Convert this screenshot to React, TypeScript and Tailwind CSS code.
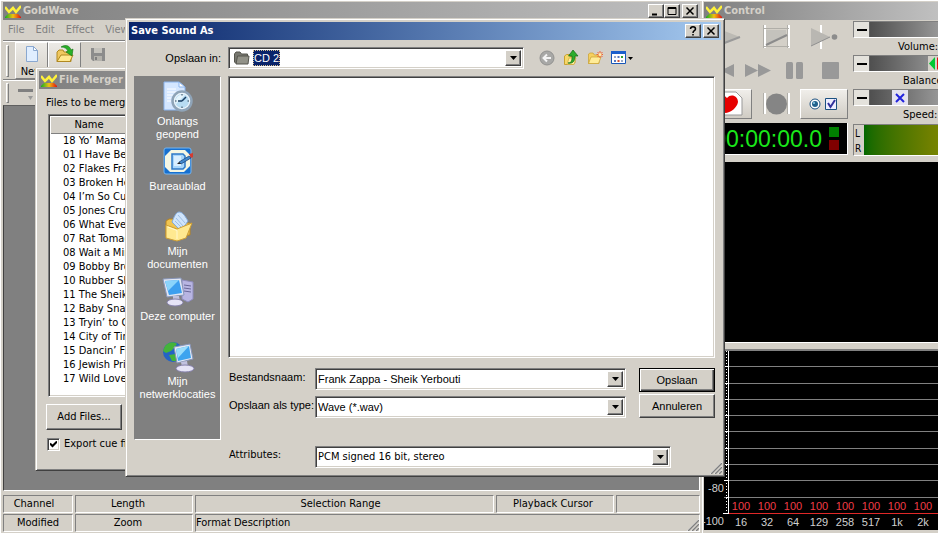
import { useState } from "react";
import type { ReactNode } from "react";
import clsx from "clsx";

const raised = "border border-t-white border-l-white border-r-[#404040] border-b-[#404040] shadow-[inset_-1px_-1px_0_#808080]";
const sunken = "border border-t-[#808080] border-l-[#808080] border-r-white border-b-white";
const deep = "border border-t-[#808080] border-l-[#808080] border-r-white border-b-white shadow-[inset_1px_1px_0_#404040,inset_-1px_-1px_0_#d4d0c8]";
const windowFrame = "border border-t-[#d4d0c8] border-l-[#d4d0c8] border-r-[#404040] border-b-[#404040] shadow-[inset_1px_1px_0_#fff,inset_-1px_-1px_0_#808080] bg-[#d4d0c8]";

const tracks = [
  "18 Yo’ Mama", "01 I Have Been", "02 Flakes Frank", "03 Broken Hearts",
  "04 I’m So Cute", "05 Jones Crush", "06 What Ever", "07 Rat Tomago", "08 Wait a Minute",
  "09 Bobby Brown", "10 Rubber Shirt", "11 The Sheik", "12 Baby Snakes", "13 Tryin’ to Grow",
  "14 City of Tiny", "15 Dancin’ Fool", "16 Jewish Princess", "17 Wild Love",
];

const bands = ["16", "32", "64", "129", "258", "517", "1k", "2k"];

export default function App() {
  return (
    <div className="relative flex h-screen min-h-[533px] overflow-hidden bg-[#d4d0c8] font-['DejaVu_Sans_Condensed','DejaVu_Sans',sans-serif] text-[11px] leading-[14px] text-black">
      <MainWindow />
      <ControlWindow />
      <MergerWindow />
      <SaveDialog />
    </div>
  );
}

function TitleBar({ title, active, logo, children }: { title: string; active?: boolean; logo?: boolean; children?: ReactNode }) {
  return (
    <div
      className={clsx(
        "flex h-[18px] shrink-0 items-center gap-0.5 bg-linear-to-r px-0.5",
        active ? "from-[#0a246a] to-[#a6caf0] text-white" : "from-[#808080] to-[#c0c0c0] text-[#d4d0c8]",
      )}
    >
      {logo && <Logo />}
      <h2 className="flex-1 truncate font-bold">{title}</h2>
      {children}
    </div>
  );
}

function CaptionButton({ label, children }: { label: string; children: ReactNode }) {
  return (
    <button aria-label={label} className={clsx("flex h-3.5 w-4 items-center justify-center bg-[#d4d0c8]", raised)}>
      <svg width="10" height="10" viewBox="0 0 10 10" fill="none" stroke="#000" strokeWidth="1.5">{children}</svg>
    </button>
  );
}

/* ---------- main window ---------- */

function MainWindow() {
  return (
    <main className="flex min-w-0 flex-1 flex-col border-t border-l border-white px-0.5 pt-px">
      <TitleBar title="GoldWave" logo>
        <div className="flex">
          <CaptionButton label="Minimize"><path d="M1 8.500h5" strokeWidth="2" /></CaptionButton>
          <CaptionButton label="Maximize"><path d="M1 1.500h8v7h-8z" strokeWidth="1" /><path d="M1 2h8" strokeWidth="2" /></CaptionButton>
        </div>
        <CaptionButton label="Close"><path d="M1.500 1.500l7 7M8.500 1.500l-7 7" /></CaptionButton>
      </TitleBar>
      <nav className="flex h-5 items-center gap-[11px] pl-[5px] text-[#808080]">
        {["File", "Edit", "Effect", "View"].map((m) => <button key={m}>{m}</button>)}
      </nav>
      <div className="flex h-[39px] items-start border-t border-[#808080] pl-[3px] shadow-[inset_0_1px_0_#fff]">
        <div className="mt-1 mr-1.5 h-8 w-[3px] border border-t-white border-r-[#808080] border-b-[#808080] border-l-white" />
        <ToolButton label="New" up><NewIcon /></ToolButton>
        <ToolButton label="Open" up><OpenIcon /></ToolButton>
        <ToolButton label="Save"><SaveIcon /></ToolButton>
      </div>
      <div className="flex h-[26px] items-center border-t border-[#808080] pl-[3px] shadow-[inset_0_1px_0_#fff]">
        <div className="mr-2 h-5 w-[3px] border border-t-white border-r-[#808080] border-b-[#808080] border-l-white" />
        <svg width="20" height="16" viewBox="0 0 20 16"><path d="M1 4h15v3H1z" fill="#808080" /><path d="M11 11h5l-2.500 4z" fill="#999" /></svg>
      </div>
      <div className="flex-1 border border-t-[#606060] border-r-white border-b-white border-l-[#404040] bg-[#808080]" />
      <footer className="flex flex-col gap-px pt-1 pb-px text-center">
        <div className="flex gap-0.5">
          <StatusCell className="w-[70px] pr-2">Channel</StatusCell>
          <StatusCell className="w-[118px] pr-3">Length</StatusCell>
          <StatusCell className="flex-1 pr-2">Selection Range</StatusCell>
          <StatusCell className="w-[118px] pr-1">Playback Cursor</StatusCell>
          <StatusCell className="w-[84px]" />
        </div>
        <div className="flex gap-0.5">
          <StatusCell className="w-[70px]">Modified</StatusCell>
          <StatusCell className="w-[118px] pr-3">Zoom</StatusCell>
          <StatusCell className="flex flex-1 justify-between">Format Description<Grip /></StatusCell>
        </div>
      </footer>
    </main>
  );
}

function ToolButton({ label, up, children }: { label: string; up?: boolean; children: ReactNode }) {
  return (
    <button
      className={clsx(
        "mt-px flex h-[37px] w-[33px] flex-col items-center gap-0.5 pt-0.5",
        up ? "border border-t-white border-r-[#808080] border-b-[#808080] border-l-white bg-linear-to-b from-[#eceae6] to-[#d4d0c8]" : "border border-transparent text-[#808080]",
      )}
    >
      {children}
      {label}
    </button>
  );
}

function StatusCell({ className, children }: { className?: string; children?: ReactNode }) {
  return <div className={clsx("h-[18px] leading-4 whitespace-nowrap", sunken, className)}>{children}</div>;
}

/* ---------- control window ---------- */

function ControlWindow() {
  return (
    <aside className="flex w-59 shrink-0 flex-col overflow-hidden border-t border-l border-white pt-px pl-px">
      <TitleBar title="Control" logo />
      <div className="flex gap-[5px] pt-px">
        <div className="w-36 shrink-0">
          <div className="grid h-[33px] grid-cols-3 items-center">
            <TransportIcon label="Play"><path d="M10 3l26 10-26 11z" fill="#bcbab4" /><path d="M10 23l26-10" stroke="#999" strokeWidth="2" /></TransportIcon>
            <TransportIcon label="Play selection"><path d="M13 1v23M37 1v23" stroke="#fff" strokeWidth="2" /><path d="M11.500 1v23M35.500 1v23M11 4.500h26M11 22.500h26" stroke="#b0aea8" /><path d="M14 6h20v5L14 20z" fill="#c4c2bc" /><path d="M14 21l21-10" stroke="#8c8c8c" strokeWidth="2" /></TransportIcon>
            <TransportIcon label="Play from cursor"><path d="M21 1v24" stroke="#fff" strokeWidth="2" /><path d="M11 4l19 9-19 9z" fill="#b9b7b2" /><path d="M11 22l19-9" stroke="#909090" /><circle cx="34.500" cy="13" r="2.800" fill="#8c8c8c" /></TransportIcon>
          </div>
          <div className="grid h-[33px] grid-cols-4 items-center">
            <TransportIcon label="Rewind"><path d="M23 7v13l-13-6.500zM36 7v13l-13-6.500z" fill="#999" /></TransportIcon>
            <TransportIcon label="Fast forward"><path d="M11 7v13l13-6.500zM24 7v13l13-6.500z" fill="#999" /></TransportIcon>
            <TransportIcon label="Pause"><rect x="16" y="5" width="7" height="17" rx="1.500" fill="#999" /><rect x="26" y="5" width="7" height="17" rx="1.500" fill="#999" /></TransportIcon>
            <TransportIcon label="Stop"><rect x="16" y="5" width="17" height="17" rx="1" fill="#999" /></TransportIcon>
          </div>
          <div className="grid h-[33px] grid-cols-3 items-center">
            <TransportIcon label="Record" up><path d="M10 2h22l6 6v17H10z" fill="#fff" stroke="#999" /><path d="M14 6c4-3 7 0 9 2 4-5 11-2 11 4-1 6-7 10-12 11-7-1-12-7-12-12 0-3 2-5 4-5z" fill="#e60000" /></TransportIcon>
            <TransportIcon label="Record selection"><path d="M13 3v21M37 3v21" stroke="#fff" strokeWidth="2" /><path d="M11.500 3v21M35.500 3v21" stroke="#b0aea8" /><circle cx="24.500" cy="14" r="10.500" fill="#858585" /></TransportIcon>
            <TransportIcon label="Properties" up>
              <circle cx="15" cy="14" r="5" fill="#fff" stroke="#1c5180" /><circle cx="15" cy="14" r="3" fill="#21618c" /><circle cx="14" cy="13" r="1" fill="#8fd0e8" />
              <path d="M25.500 8.500h11v11h-11z" fill="#eef" stroke="#1c5180" /><path d="M28 13l2.500 4L35 10" stroke="#31319c" strokeWidth="2" />
            </TransportIcon>
          </div>
          <div className="mt-[3px] flex h-8 items-center justify-end gap-[7px] border-r border-b border-white bg-black pr-2">
            <output className="font-['Liberation_Sans',sans-serif] text-[23px] leading-7 text-[#1ae81a]">00:00:00.0</output>
            <div className="flex flex-col gap-[3px]">
              <span className="size-2.5 bg-[#008000]" />
              <span className="size-2.5 bg-[#800000]" />
            </div>
          </div>
        </div>
        <div className="w-36 shrink-0">
          <Slider label="Volume:" labelClass="pl-[45px]" />
          <Slider label="Balance:" labelClass="pl-[50px]">
            <span className="ml-[58px] flex w-4 items-center bg-[#d4d0c8] px-px">
              <svg width="14" height="13" viewBox="0 0 14 13"><path d="M6 0v13L0 6.500z" fill="#00c832" /><path d="M8 0v13l6-6.500z" fill="#e01010" /></svg>
            </span>
          </Slider>
          <Slider label="Speed:" labelClass="pl-[50px]">
            <span className="ml-[22px] flex w-4 items-center justify-center bg-[#e4e2f0]">
              <svg width="10" height="10" viewBox="0 0 10 10" stroke="#2222dd" strokeWidth="2"><path d="M1 1l8 8M9 1L1 9" /></svg>
            </span>
          </Slider>
          <div className={clsx("mt-px flex h-8", sunken)}>
            <div className="w-2.5 pt-px pl-px text-[10px] leading-[15px]">L<br />R</div>
            <div className="flex-1 bg-linear-to-r from-[#006800] via-[#708000] to-[#a0a000]" />
          </div>
        </div>
      </div>
      <div className="mt-1.5 flex-1 border-b border-white bg-black" />
      <Spectrum />
    </aside>
  );
}

function TransportIcon({ label, up, children }: { label: string; up?: boolean; children: ReactNode }) {
  return (
    <button
      aria-label={label}
      className={clsx(
        "flex h-[30px] items-center justify-center",
        up && "border border-t-white border-r-[#808080] border-b-[#808080] border-l-white bg-linear-to-b from-[#f0eeea] to-[#d0ccc4]",
      )}
    >
      <svg className="shrink-0" width="48" height="27" viewBox="0 0 48 27" fill="none">{children}</svg>
    </button>
  );
}

function Slider({ label, labelClass, children }: { label: string; labelClass: string; children?: ReactNode }) {
  return (
    <div className="h-[34px]">
      <div className={clsx("flex h-[17px] bg-linear-to-r from-[#404040] to-[#d8d8d8]", sunken)}>
        <button aria-label={label + " down"} className="flex w-4 items-center justify-center border-r border-[#606060] bg-[#e4e2dc]">
          <span className="h-0.5 w-2.5 bg-black" />
        </button>
        {children}
      </div>
      <div className={clsx("leading-[17px]", labelClass)}>{label}</div>
    </div>
  );
}

function Spectrum() {
  return (
    <div className="mt-1.5 mb-[3px] h-[181px] overflow-hidden border-t-2 border-[#808080] bg-black font-['Liberation_Sans',sans-serif]">
      <svg width="300" height="180" viewBox="0 0 300 180" fontSize="11">
        <g stroke="#808080">
          {[15, 32, 48, 64, 80, 97, 113, 129, 146].map((y) => <path key={y} d={`M20 ${y}.5H300`} />)}
        </g>
        <path d="M22.500 0V163" stroke="#fff" strokeDasharray="1 2" />
        <path d="M24.500 0V163" stroke="#fff" />
        <path d="M20 15.500h5M20 32.500h5M20 48.500h5M20 64.500h5M20 80.500h5M20 97.500h5M20 113.500h5M20 129.500h5M22 146.500h3M19 162.500h5" stroke="#fff" />
        <path d="M25 162.500H300" stroke="#e02828" />
        <g fill="#d0d0d0" textAnchor="end">
          <text x="20" y="141">-80</text>
          <text x="20" y="174">-100</text>
        </g>
        <g textAnchor="middle">
          {bands.map((b, i) => (
            <g key={b}>
              <text x={37 + i * 26} y="159" fill="#f03c46">100</text>
              <text x={37 + i * 26} y="175" fill="#d0d0d0">{b}</text>
            </g>
          ))}
        </g>
      </svg>
    </div>
  );
}

/* ---------- file merger ---------- */

function MergerWindow() {
  const [cue, setCue] = useState(true);
  return (
    <section className={clsx("absolute top-[67px] left-[35px] flex h-[404px] w-[480px] flex-col p-[3px]", windowFrame)}>
      <TitleBar title="File Merger" logo />
      <div className="flex flex-1 flex-col px-[7px] pt-2">
        <h3 className="leading-3">Files to be merged:</h3>
        <div className={clsx("mt-[5px] ml-0.5 h-[283px] overflow-hidden bg-white p-0.5", deep)}>
          <table className="w-full border-collapse">
            <thead>
              <tr className="h-4 bg-[#d4d0c8]">
                <th className="w-20 border-b border-[#808080] p-0 pr-1 font-normal">Name</th>
                <th className="border-b border-[#808080] p-0 font-normal" />
              </tr>
            </thead>
            <tbody>
              {tracks.map((t) => <tr key={t} className="h-3.5"><td colSpan={2} className="p-0 pl-3">{t}</td></tr>)}
            </tbody>
          </table>
        </div>
        <button className={clsx("mt-[7px] h-[26px] w-[76px]", raised)}>Add Files...</button>
        <label className="mt-[7px] flex items-center gap-1 pl-px">
          <Check checked={cue} onChange={setCue} />
          Export cue file
        </label>
      </div>
    </section>
  );
}

function Check({ checked, onChange }: { checked: boolean; onChange: (v: boolean) => void }) {
  return (
    <span className="relative flex">
      <input type="checkbox" checked={checked} onChange={(e) => onChange(e.target.checked)} className={clsx("size-[13px] appearance-none bg-white", deep)} />
      {checked && <svg className="pointer-events-none absolute top-[3px] left-[3px]" width="7" height="7" viewBox="0 0 7 7" fill="none" stroke="#000" strokeWidth="2"><path d="M0 2.500l2.500 2.500L7 .5" /></svg>}
    </span>
  );
}

/* ---------- save dialog ---------- */

function SaveDialog() {
  const [name, setName] = useState("Frank Zappa - Sheik Yerbouti");
  return (
    <section role="dialog" aria-label="Save Sound As" className={clsx("absolute top-[18px] left-[125px] flex h-[459px] w-[600px] flex-col p-[3px] font-['Liberation_Sans',sans-serif]", windowFrame)}>
      <div className="font-['DejaVu_Sans_Condensed','DejaVu_Sans',sans-serif]">
        <TitleBar title="Save Sound As" active>
          <CaptionButton label="Help"><path d="M2.500 3c0-3 5-3 5 0 0 2-2.500 1.500-2.500 4M5 8v1.500" /></CaptionButton>
          <CaptionButton label="Close"><path d="M1.500 1.500l7 7M8.500 1.500l-7 7" /></CaptionButton>
        </TitleBar>
      </div>
      <div className="flex h-9 items-center pl-[5px]">
        <label htmlFor="look-in" className="w-[87px] text-right">Opslaan in:</label>
        <div className={clsx("ml-[7px] flex h-[22px] w-[296px] items-center bg-white p-0.5 pl-1", deep)}>
          <FolderIcon />
          <select id="look-in" className="ml-0.5 h-4 w-[27px] appearance-none bg-[#0a246a] pl-px leading-4 text-white outline-1 -outline-offset-1 outline-dotted outline-[#d8c090]">
            <option>CD 2</option>
          </select>
          <span className="flex-1" />
          <DropButton />
        </div>
        <div className="ml-[15px] flex items-center gap-2">
          <button aria-label="Back"><BackIcon /></button>
          <button aria-label="Up one level"><UpIcon /></button>
          <button aria-label="New folder"><NewFolderIcon /></button>
          <button aria-label="Views"><ViewsIcon /></button>
        </div>
      </div>
      <div className="flex flex-1 gap-[7px] pr-1.5 pl-[5px]">
        <div className={clsx("h-[364px] w-[87px] bg-[#808080] pt-px text-white", sunken)}>
          <Place icon={<RecentIcon />}>Onlangs<br />geopend</Place>
          <Place icon={<DesktopIcon />}>Bureaublad</Place>
          <Place icon={<DocumentsIcon />}>Mijn<br />documenten</Place>
          <Place icon={<ComputerIcon />}>Deze computer</Place>
          <Place icon={<NetworkIcon />}>Mijn<br />netwerklocaties</Place>
        </div>
        <div className="flex flex-1 flex-col">
          <div className={clsx("h-[282px] bg-white", deep)} />
          <div className="mt-2.5 flex justify-between">
            <div className="flex flex-col gap-1.5">
              <Row label="Bestandsnaam:" id="file-name">
                <div className={clsx("flex w-[311px] bg-white p-0.5", deep)}>
                  <input id="file-name" value={name} onChange={(e) => setName(e.target.value)} className="min-w-0 flex-1 outline-none" />
                  <DropButton />
                </div>
              </Row>
              <Row label="Opslaan als type:" id="file-type">
                <DropDown id="file-type" value="Wave (*.wav)" className="w-[311px]" />
              </Row>
            </div>
            <div className="flex flex-col gap-0.5">
              <button className="h-6 w-[76px] border border-black shadow-[inset_1px_1px_0_#fff,inset_-1px_-1px_0_#404040,inset_-2px_-2px_0_#808080]">Opslaan</button>
              <button className={clsx("h-6 w-[76px]", raised)}>Annuleren</button>
            </div>
          </div>
          <div className="mt-7 font-['DejaVu_Sans_Condensed','DejaVu_Sans',sans-serif]">
            <Row label="Attributes:" id="attributes">
              <DropDown id="attributes" value="PCM signed 16 bit, stereo" className="w-[356px]" />
            </Row>
          </div>
        </div>
      </div>
      <div className="absolute right-0.5 bottom-0.5"><Grip /></div>
    </section>
  );
}

function Row({ label, id, children }: { label: string; id: string; children: ReactNode }) {
  return (
    <div className="flex h-[22px]">
      <label htmlFor={id} className="w-[87px] pt-0.5 pl-px whitespace-nowrap">{label}</label>
      {children}
    </div>
  );
}

function DropDown({ id, value, className }: { id: string; value: string; className: string }) {
  return (
    <div className={clsx("relative flex bg-white p-0.5", deep, className)}>
      <select id={id} className="flex-1 appearance-none outline-none">
        <option>{value}</option>
      </select>
      <span className="pointer-events-none flex"><DropButton /></span>
    </div>
  );
}

function DropButton() {
  return (
    <button aria-label="Open list" tabIndex={-1} className={clsx("flex h-4 w-4 items-center justify-center self-center bg-[#d4d0c8]", raised)}>
      <svg width="7" height="4" viewBox="0 0 7 4"><path d="M0 0h7L3.500 4z" /></svg>
    </button>
  );
}

function Place({ icon, children }: { icon: ReactNode; children: ReactNode }) {
  return (
    <button className="flex h-[65px] w-full flex-col items-center pt-[3px] leading-[13px]">
      {icon}
      <span className="mt-0.5 whitespace-nowrap">{children}</span>
    </button>
  );
}

/* ---------- icons ---------- */

function Logo() {
  return (
    <svg className="shrink-0" width="16" height="16" viewBox="0 0 16 16" fill="none">
      <defs>
        <linearGradient id="meter"><stop offset="0" stopColor="#10b020" /><stop offset=".5" stopColor="#f0c010" /><stop offset="1" stopColor="#e01010" /></linearGradient>
      </defs>
      <path d="M0 14l3-3h10l3 3v1H0z" fill="url(#meter)" />
      <path d="M0 4l4 5 4-4 3 4 5-6" stroke="#fff23a" strokeWidth="2.500" />
    </svg>
  );
}

function Grip() {
  return (
    <svg width="13" height="13" viewBox="0 0 13 13" className="mt-[3px]">
      <path d="M1 13L13 1M5 13l8-8M9 13l4-4" stroke="#fff" />
      <path d="M2 13L13 2M6 13l7-7M10 13l3-3" stroke="#808080" strokeWidth="1.500" />
    </svg>
  );
}

function NewIcon() {
  return (
    <svg className="shrink-0" width="16" height="18" viewBox="0 0 16 18"><path d="M2.500 1.500h7l4 4v11h-11z" fill="#e0eeff" stroke="#8aa8d0" /><path d="M9.500 1.500v4h4z" fill="#fff" stroke="#8aa8d0" /></svg>
  );
}

function OpenIcon() {
  return (
    <svg className="shrink-0" width="20" height="18" viewBox="0 0 20 18">
      <path d="M2 16.500V7l2-2h4l1 2h7v9.500z" fill="#f0c860" stroke="#b08820" />
      <path d="M2 16.500L6 10h12l-3 6.500z" fill="#ffe890" stroke="#b08820" />
      <path d="M6 2c5-3 9-1 10 3l2-1-1 7-6-4 2-1c-1-2-3-4-7-4z" fill="#28b028" stroke="#107010" strokeWidth=".6" />
    </svg>
  );
}

function SaveIcon() {
  return (
    <svg className="shrink-0" width="16" height="18" viewBox="0 0 16 18"><path d="M1 3h14v13H3l-2-2z" fill="#8c8c8c" /><path d="M4 3h8v5H4z" fill="#c4c2bc" /><path d="M4 11h8v5H4z" fill="#b4b2ac" /><path d="M5 12h2v3H5z" fill="#808080" /></svg>
  );
}

function FolderIcon() {
  return (
    <svg width="18" height="16" viewBox="0 0 18 16"><path d="M1.500 12V4l1.500-2h4l1.500 2h6v8l-1 1.500H3z" fill="#77776f" stroke="#55554d" /><path d="M4.500 6H16l-1 8H3z" fill="#929288" stroke="#55554d" /></svg>
  );
}

function BackIcon() {
  return (
    <svg width="16" height="16" viewBox="0 0 16 16" fill="none"><circle cx="8" cy="8" r="7" fill="#a8a8a6" stroke="#929290" /><path d="M12 8H5M8 4.500L4.500 8 8 11.500" stroke="#f4f4f4" strokeWidth="2" /></svg>
  );
}

function UpIcon() {
  return (
    <svg width="16" height="16" viewBox="0 0 16 16">
      <path d="M1.500 14.500V6l2-1.500H7v2h5v6l-2 2z" fill="#f6d868" stroke="#c8a030" />
      <path d="M4 14.500L6 8h7l-2 6.500z" fill="#fff0a0" stroke="#c8a030" strokeWidth=".6" />
      <path d="M5 13c4 0 4-3 4-7H5.500L10 0l5 6h-3c0 5-2 8-7 7z" fill="#2cac2c" stroke="#146c14" strokeWidth=".7" />
    </svg>
  );
}

function NewFolderIcon() {
  return (
    <svg width="16" height="16" viewBox="0 0 16 16">
      <path d="M1.500 13.500V4L3 3h3l1.500 2H12v8.500z" fill="#f6d060" stroke="#c8a030" strokeWidth=".7" />
      <path d="M1.500 13.500L4 7h10l-2.500 6.500z" fill="#ffec98" stroke="#c8a030" strokeWidth=".7" />
      <path d="M13 1v7M9.500 4.500h7M10.500 2l5 5M15.500 2l-5 5" stroke="#f06030" /><circle cx="13" cy="4.500" r="1.500" fill="#fff0b0" />
    </svg>
  );
}

function ViewsIcon() {
  return (
    <svg width="23" height="16" viewBox="0 0 23 16">
      <path d="M.5 1.500h14v12H.5z" fill="#fff" stroke="#1856b8" /><path d="M0 1h15v3H0z" fill="#1c60cc" />
      <path d="M3 6h2v2H3zM10 10h2v2h-2z" fill="#98a8c8" /><path d="M6.500 6h2v2h-2zM3 10h2v2H3z" fill="#5878c0" /><path d="M10 6h2v2h-2z" fill="#30a030" /><path d="M6.500 10h2v2h-2z" fill="#d05030" />
      <path d="M17 7h5l-2.500 3z" />
    </svg>
  );
}

function RecentIcon() {
  return (
    <svg width="32" height="32" viewBox="0 0 32 32">
      <path d="M2 1h15l6 5v23H2z" fill="#d4e6ff" stroke="#8ab4ee" /><path d="M17 1v5h6z" fill="#fff" stroke="#8ab4ee" />
      <path d="M5 8h9M5 11h9M5 14h6M5 17h4M5 20h4" stroke="#fff" />
      <circle cx="20" cy="20" r="9.500" fill="#eef6fc" stroke="#8fa4b8" strokeWidth="2.500" /><circle cx="20" cy="20" r="7" fill="#b8dcf2" /><path d="M14 23a7 7 0 0 1 9-9z" fill="#e6f5fd" />
      <path d="M20 20l4-4M20 20h-4" stroke="#183c60" strokeWidth="1.500" /><path d="M20 13v1.500M20 25.500V27M13 20h1.500M25.500 20H27" stroke="#345" />
    </svg>
  );
}

function DesktopIcon() {
  return (
    <svg width="32" height="32" viewBox="0 0 32 32">
      <rect x="2" y="2" width="27" height="26" rx="2" fill="#1670d0" stroke="#74b4ef" />
      <path d="M9 4h14l5 5v11l-6 6H8l-5-5V10z" fill="#f4f6e4" />
      <path d="M10 8h11l2 2v11l-2 2H10z" fill="#a8d6fa" stroke="#2c78c8" strokeWidth="1.500" /><path d="M12 10h7v10h-7z" fill="#d8eeff" />
      <path d="M17 16l10-6 2 2-10 6z" fill="#3f86cc" stroke="#173d73" strokeWidth=".7" /><path d="M27 8l4-1v4l-2 1z" fill="#d33b31" /><path d="M15 18l2-2 2 2z" fill="#222" />
    </svg>
  );
}

function DocumentsIcon() {
  return (
    <svg width="32" height="32" viewBox="0 0 32 32">
      <path d="M4 26V10l3-2h4l4 4h13v12z" fill="#f0c450" stroke="#b78420" />
      <path d="M17 1c3 0 5 2 9 9l-7 10-9-9c2-5 4-10 7-10z" fill="#cfe4fb" stroke="#82a9d8" /><path d="M16 4l7 8M14 7l7 8M13 10l6 6" stroke="#9dbee5" />
      <path d="M4 27V14l11 4 15-6-6 15-9 3z" fill="#ffe990" stroke="#ce9e34" /><path d="M6 16l9 3.500V28" stroke="#fff8d0" fill="none" />
    </svg>
  );
}

function ComputerIcon() {
  return (
    <svg width="32" height="32" viewBox="0 0 32 32">
      <path d="M20 4l11 2v17l-5 3-6-3z" fill="#b8b5e2" stroke="#8f8cbc" /><path d="M22 9l7 1M22 12l7 1M22 15l7 1" stroke="#6a6898" />
      <path d="M1 3l18-1 3 17-17 2z" fill="#e1e6f4" stroke="#8795b8" /><path d="M3 5l14-1 3 13-13 2z" fill="#3d9fef" /><path d="M3 5l14-1-11 11z" fill="#8bd4fb" />
      <path d="M11 20h6l1 6h-7z" fill="#c1c1de" /><ellipse cx="13" cy="26.500" rx="8" ry="3.500" fill="#e6e4f6" stroke="#8580aa" />
    </svg>
  );
}

function NetworkIcon() {
  return (
    <svg width="34" height="32" viewBox="0 0 34 32">
      <circle cx="12" cy="11" r="10" fill="#2464c4" /><path d="M4 5c5-5 10-4 12-2l-3 4-3 3-5 2-3-2zM8 14l7-1v7h-4z" fill="#45b33a" />
      <path d="M13 6l16-3 3 15-16 4z" fill="#e3e8f5" stroke="#8795b8" /><path d="M15 8l13-3 2 12-13 3z" fill="#3da4ef" /><path d="M15 8l13-3-11 12z" fill="#9addfb" />
      <path d="M20 21l6-1 1 6h-6z" fill="#c1c1de" /><ellipse cx="24" cy="27.500" rx="9" ry="3.500" fill="#e6e4f6" stroke="#8580aa" />
    </svg>
  );
}
